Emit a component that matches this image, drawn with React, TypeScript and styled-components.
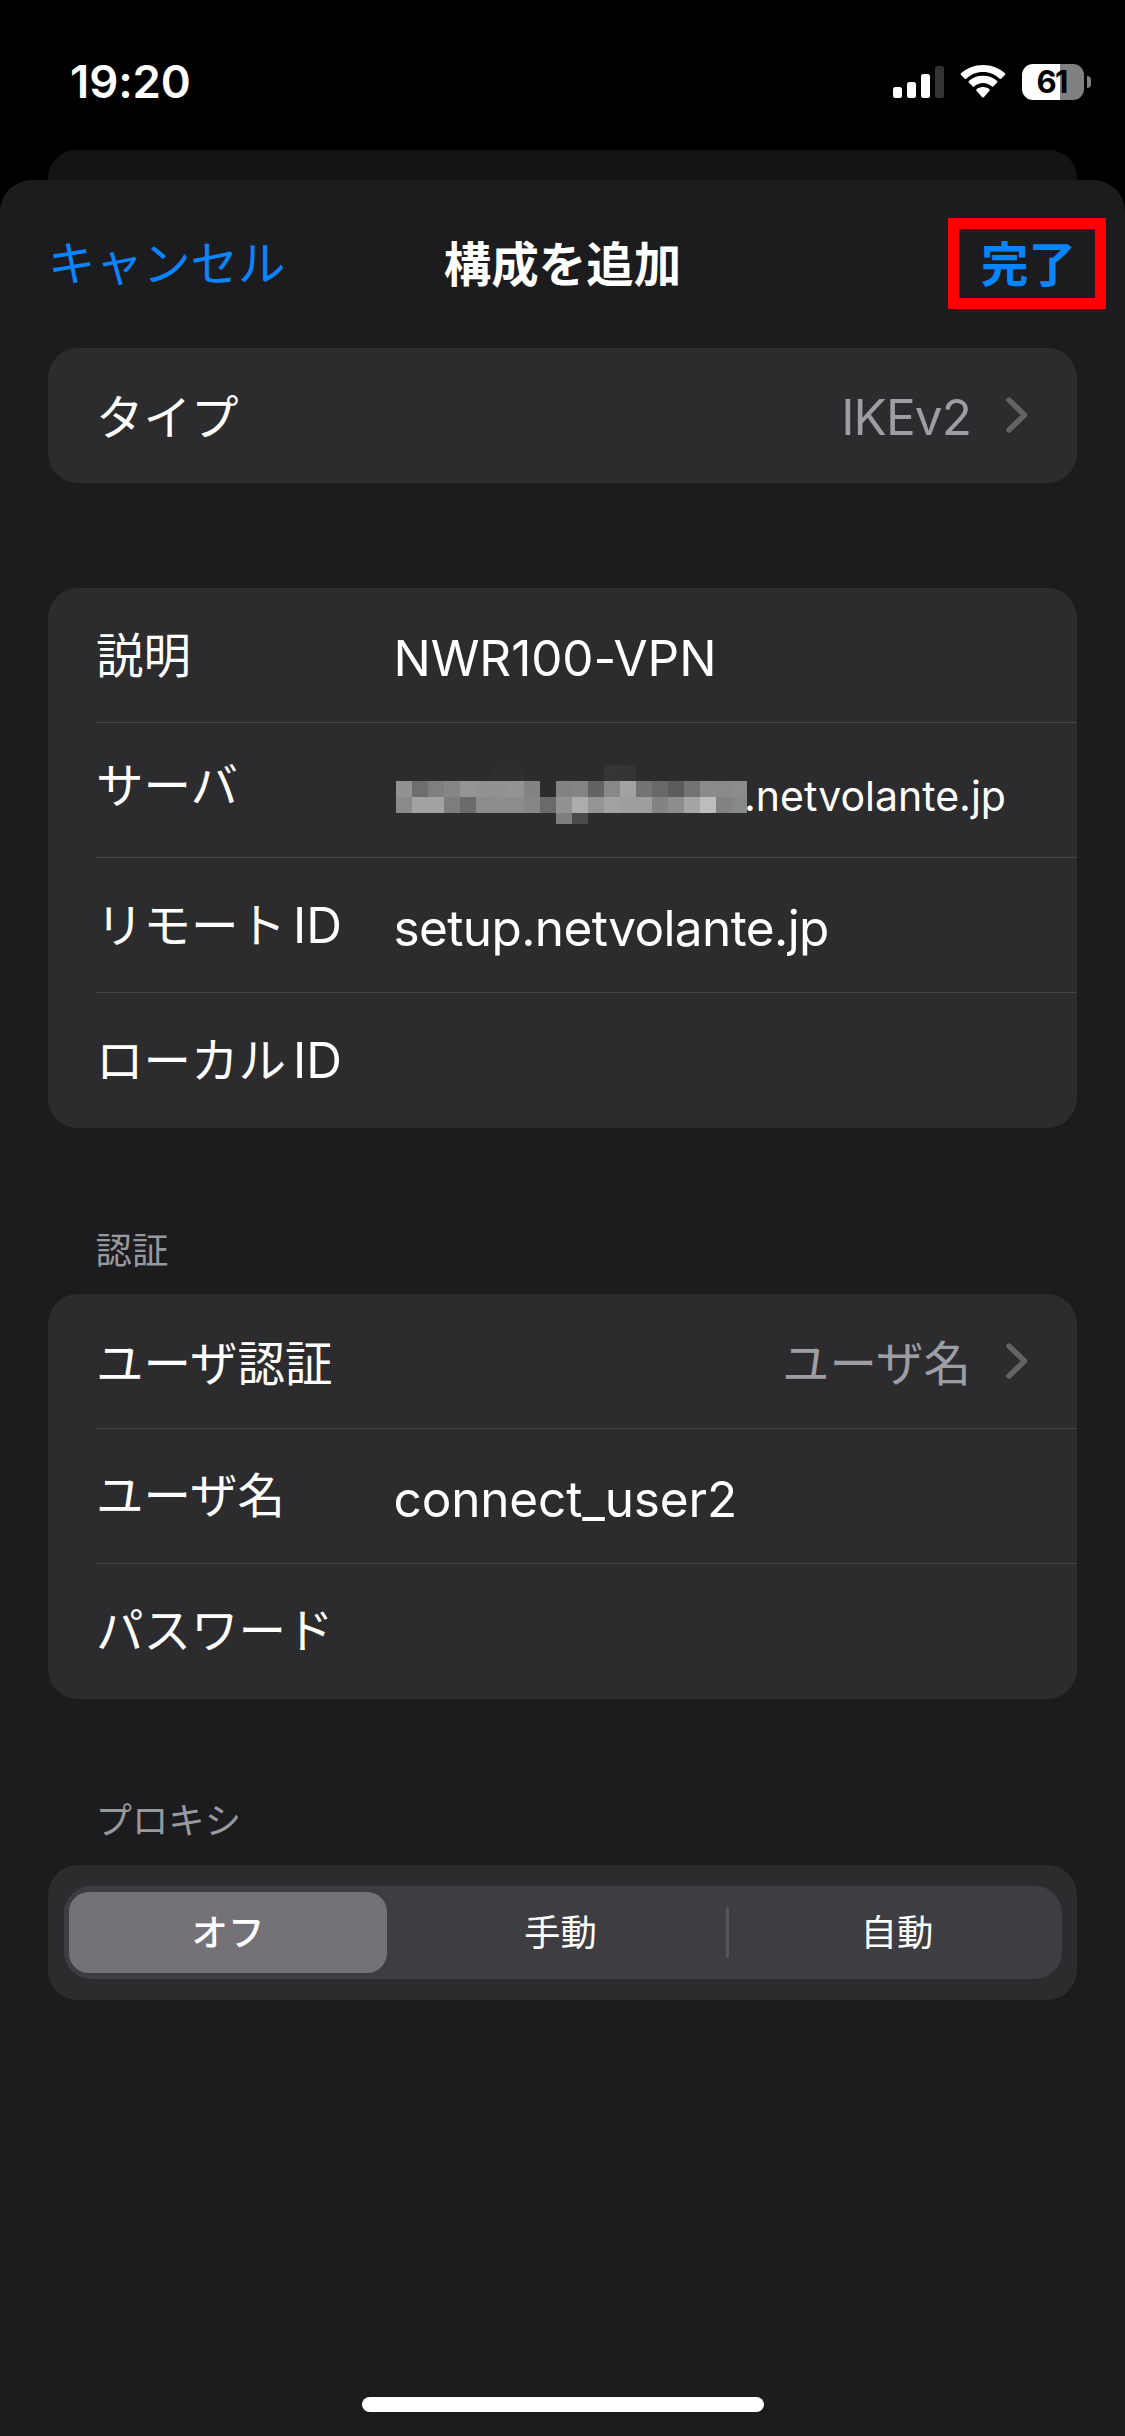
import React from "react";
import styled, { createGlobalStyle } from "styled-components";

const GlobalStyle = createGlobalStyle`
  *, *::before, *::after { box-sizing: border-box; }
  body {
    margin: 0;
    background: #000;
    color: #fff;
    font-family: Inter, "Noto Sans CJK JP", sans-serif;
  }
`;

const Screen = styled.div`
  display: flex;
  flex-direction: column;
  width: 1125px;
  height: 2436px;
  overflow: hidden;
  background: #000;
`;

const StatusBar = styled.header`
  display: flex;
  flex: none;
  justify-content: space-between;
  height: 150px;
  padding: 64px 34px 0 70px;
`;

const Clock = styled.time`
  height: 36px;
  font-size: 45.5px;
  font-weight: 600;
  line-height: 36px;
  letter-spacing: -0.1px;
`;

const StatusIcons = styled.div`
  display: flex;
  align-items: flex-start;
`;

const SignalIcon = styled.svg`
  margin: 2px 16px 0 0;
`;

const WifiIcon = styled.svg`
  margin: 1px 16px 0 0;
`;

const Battery = styled.div`
  display: flex;
  align-items: center;
  gap: 3px;
`;

const BatteryBody = styled.div`
  width: 62px;
  height: 36px;
  padding-right: 3px;
  border-radius: 11px;
  background: linear-gradient(to right, #fff 38px, #808080 38px);
  color: #000;
  font-size: 31px;
  font-weight: 700;
  line-height: 36px;
  letter-spacing: -1.8px;
  text-align: center;
`;

const BatteryTip = styled.div`
  width: 4px;
  height: 12px;
  border-radius: 0 6px 6px 0;
  background: #808080;
`;

const BackSheet = styled.div`
  flex: none;
  height: 30px;
  margin: 0 48px;
  border-radius: 28px 28px 0 0;
  background: #141414;
`;

const Sheet = styled.main`
  display: flex;
  flex: 1;
  flex-direction: column;
  border-radius: 32px 32px 0 0;
  background: #1c1c1e;
`;

const NavBar = styled.nav`
  display: grid;
  grid-template-columns: 1fr auto 1fr;
  flex: none;
  height: 168px;
  padding: 38px 19px 0;
`;

const NavButton = styled.button`
  height: 91px;
  padding: 0 0 0 29px;
  border: 0;
  background: none;
  color: #0a84ff;
  font: 400 47.5px/91px Inter, "Noto Sans CJK JP", sans-serif;
  text-align: left;
`;

const DoneButton = styled(NavButton)`
  justify-self: end;
  width: 158px;
  padding: 1px 0 0 3px;
  border: 11px solid #f00;
  font-weight: 600;
  line-height: 69px;
  text-align: center;
`;

const Title = styled.h1`
  margin: 0;
  padding-top: 1px;
  font-size: 47.5px;
  font-weight: 600;
  line-height: 91px;
`;

const Card = styled.section<{ $gap?: number }>`
  flex: none;
  margin: ${(p) => p.$gap ?? 0}px 48px 0;
  border-radius: 30px;
  background: #2c2c2e;
`;

const Row = styled.div`
  display: flex;
  align-items: center;
  height: 135px;
  margin-left: 48px;
  padding-right: 49px;
  border-bottom: 1px solid #464649;
  &:last-child { border-bottom-color: transparent; }
`;

const Label = styled.div<{ $shift?: number }>`
  flex: none;
  width: 297.5px;
  font-size: 47.5px;
  line-height: 60px;
  margin-top: ${(p) => p.$shift ?? 0}px;
  white-space: nowrap;
`;

const LatinSuffix = styled.span`
  margin-left: 7px;
  font-size: 49.5px;
`;

const Value = styled.div<{ $size?: number; $spacing?: number; $shift?: number }>`
  font-size: ${(p) => p.$size ?? 49.5}px;
  letter-spacing: ${(p) => p.$spacing ?? 0}px;
  line-height: 60px;
  margin-top: ${(p) => p.$shift ?? 0}px;
  white-space: nowrap;
`;

const Detail = styled(Value)`
  margin-left: auto;
  color: #9d9da4;
`;

const ChevronIcon = styled.svg`
  flex: none;
  margin-left: 35px;
`;

const ServerValue = styled.div`
  display: flex;
  align-items: center;
`;

const Mosaic = styled.div`
  display: grid;
  grid-template-columns: repeat(21, 16px) 15px;
  grid-template-rows: 16px 16px 16px 11px;
  margin: 9px -3px 0 2.5px;
`;

const Tile = styled.i<{ $tone: string }>`
  background: ${(p) => p.$tone};
`;

const SectionTitle = styled.h2<{ $top?: number }>`
  flex: none;
  height: 166px;
  margin: 0;
  padding: ${(p) => p.$top ?? 95}px 0 0 95.5px;
  color: #98989f;
  font-size: 36.4px;
  font-weight: 400;
  line-height: 54px;
`;

const SegmentCard = styled(Card)`
  height: 135px;
  padding: 21px 15px 21px 16px;
`;

const Segments = styled.div`
  display: flex;
  align-items: center;
  height: 93px;
  padding: 0 5px;
  border-radius: 27px;
  background: #3e3d42;
`;

const Segment = styled.button<{ $active?: boolean; $width: number }>`
  width: ${(p) => p.$width}px;
  height: 81px;
  padding: 0 0 0 ${(p) => (p.$active ? 0 : 8)}px;
  border: 0;
  border-radius: 20px;
  background: ${(p) => (p.$active ? "#747278" : "transparent")};
  color: #fff;
  font: ${(p) => (p.$active ? 500 : 400)} 36.4px/80px Inter, "Noto Sans CJK JP", sans-serif;
`;

const SegmentDivider = styled.i`
  width: 3px;
  height: 51px;
  border-radius: 2px;
  background: #56555b;
`;

const HomeIndicator = styled.div`
  flex: none;
  width: 402px;
  height: 15px;
  margin: auto auto 24px;
  border-radius: 8px;
  background: #fff;
`;

const BASE = "#2c2c2e";
const expand = (row: string) =>
  row.split(" ").map((c) => (c === "--" ? BASE : `#${c}${c}${c}`));

const mosaicTones = [
  "-- -- -- -- -- -- 2e 2e -- -- -- -- -- 35 34 -- -- -- -- -- -- --",
  "92 6e 7f 86 95 92 92 94 83 -- 82 84 63 88 a2 74 68 5b 74 8b 8a 8c",
  "8a a2 a2 7d 6b 8c 8d 8c 86 6a 92 ac 95 a2 9e 9e 83 8d a5 bd 82 88",
  "-- -- -- -- -- -- -- -- -- -- 7e 4a -- -- -- -- -- -- -- -- -- --",
].flatMap(expand);

const Chevron = () => (
  <ChevronIcon width="22" height="38" viewBox="0 0 22 38" fill="none">
    <path d="M3 4L18.5 19L3 34" stroke="#636366" strokeWidth="5.4" strokeLinecap="round" strokeLinejoin="round" />
  </ChevronIcon>
);

export default function App() {
  return (
    <Screen>
      <GlobalStyle />
      <StatusBar>
        <Clock>19:20</Clock>
        <StatusIcons>
          <SignalIcon width="51" height="32" viewBox="0 0 51 32">
            <rect x="0" y="21" width="9" height="11" rx="2.5" fill="#fff" />
            <rect x="14" y="16" width="9" height="16" rx="2.5" fill="#fff" />
            <rect x="28" y="8" width="9" height="24" rx="2.5" fill="#fff" />
            <rect x="42" y="0" width="9" height="32" rx="2.5" fill="#333" />
          </SignalIcon>
          <WifiIcon width="46" height="33" viewBox="0 0 46 33" fill="#fff">
            <path d="M23 7C29.5 7 35.4 9.6 39.7 13.8C40.1 14.2 40.7 14.2 41.1 13.8L45 9.9C45.5 9.4 45.5 8.8 45 8.3C39.3 3.1 31.5 0 23 0S6.700 3.100 1 8.300C.5 8.800 .5 9.400 1 9.900L4.900 13.800C5.300 14.200 5.900 14.200 6.300 13.800C10.600 9.600 16.500 7 23 7Z" />
            <path d="M23 18C26.400 18 29.500 19.300 31.900 21.400C32.300 21.800 32.900 21.800 33.300 21.400L37.200 17.500C37.600 17.100 37.600 16.500 37.200 16C33.500 12.700 28.500 10.800 23 10.800S12.500 12.700 8.800 16C8.400 16.500 8.400 17.100 8.800 17.500L12.700 21.400C13.100 21.800 13.700 21.800 14.100 21.400C16.500 19.300 19.600 18 23 18Z" />
            <path d="M23 22C19.900 22 18.100 23 16.600 24.200C16.100 24.700 16.100 25.200 16.500 25.700L22.200 32.200C22.700 32.700 23.300 32.700 23.800 32.200L29.500 25.700C29.900 25.200 29.900 24.700 29.400 24.200C27.900 23 26.100 22 23 22Z" />
          </WifiIcon>
          <Battery>
            <BatteryBody>61</BatteryBody>
            <BatteryTip />
          </Battery>
        </StatusIcons>
      </StatusBar>
      <BackSheet />
      <Sheet>
        <NavBar>
          <NavButton>キャンセル</NavButton>
          <Title>構成を追加</Title>
          <DoneButton>完了</DoneButton>
        </NavBar>
        <Card>
          <Row>
            <Label $shift={5}>タイプ</Label>
            <Detail $shift={4} $spacing={-0.9}>IKEv2</Detail>
            <Chevron />
          </Row>
        </Card>
        <Card $gap={105}>
          <Row>
            <Label $shift={1}>説明</Label>
            <Value $shift={5} $spacing={-0.1}>NWR100-VPN</Value>
          </Row>
          <Row>
            <Label $shift={-9}>サーバ</Label>
            <ServerValue>
              <Mosaic>
                {mosaicTones.map((tone, i) => (
                  <Tile key={i} $tone={tone} />
                ))}
              </Mosaic>
              <Value $size={41} $shift={12}>.netvolante.jp</Value>
            </ServerValue>
          </Row>
          <Row>
            <Label>リモート<LatinSuffix>ID</LatinSuffix></Label>
            <Value $shift={5} $spacing={-0.62}>setup.netvolante.jp</Value>
          </Row>
          <Row>
            <Label>ローカル<LatinSuffix>ID</LatinSuffix></Label>
          </Row>
        </Card>
        <SectionTitle $top={96}>認証</SectionTitle>
        <Card>
          <Row>
            <Label $shift={5}>ユーザ認証</Label>
            <Detail $size={47.5} $shift={5}>ユーザ名</Detail>
            <Chevron />
          </Row>
          <Row>
            <Label>ユーザ名</Label>
            <Value $shift={5} $spacing={-0.15}>connect_user2</Value>
          </Row>
          <Row>
            <Label>パスワード</Label>
          </Row>
        </Card>
        <SectionTitle>プロキシ</SectionTitle>
        <SegmentCard>
          <Segments>
            <Segment $active $width={318}>オフ</Segment>
            <Segment $width={339}>手動</Segment>
            <SegmentDivider />
            <Segment $width={328}>自動</Segment>
          </Segments>
        </SegmentCard>
        <HomeIndicator />
      </Sheet>
    </Screen>
  );
}
